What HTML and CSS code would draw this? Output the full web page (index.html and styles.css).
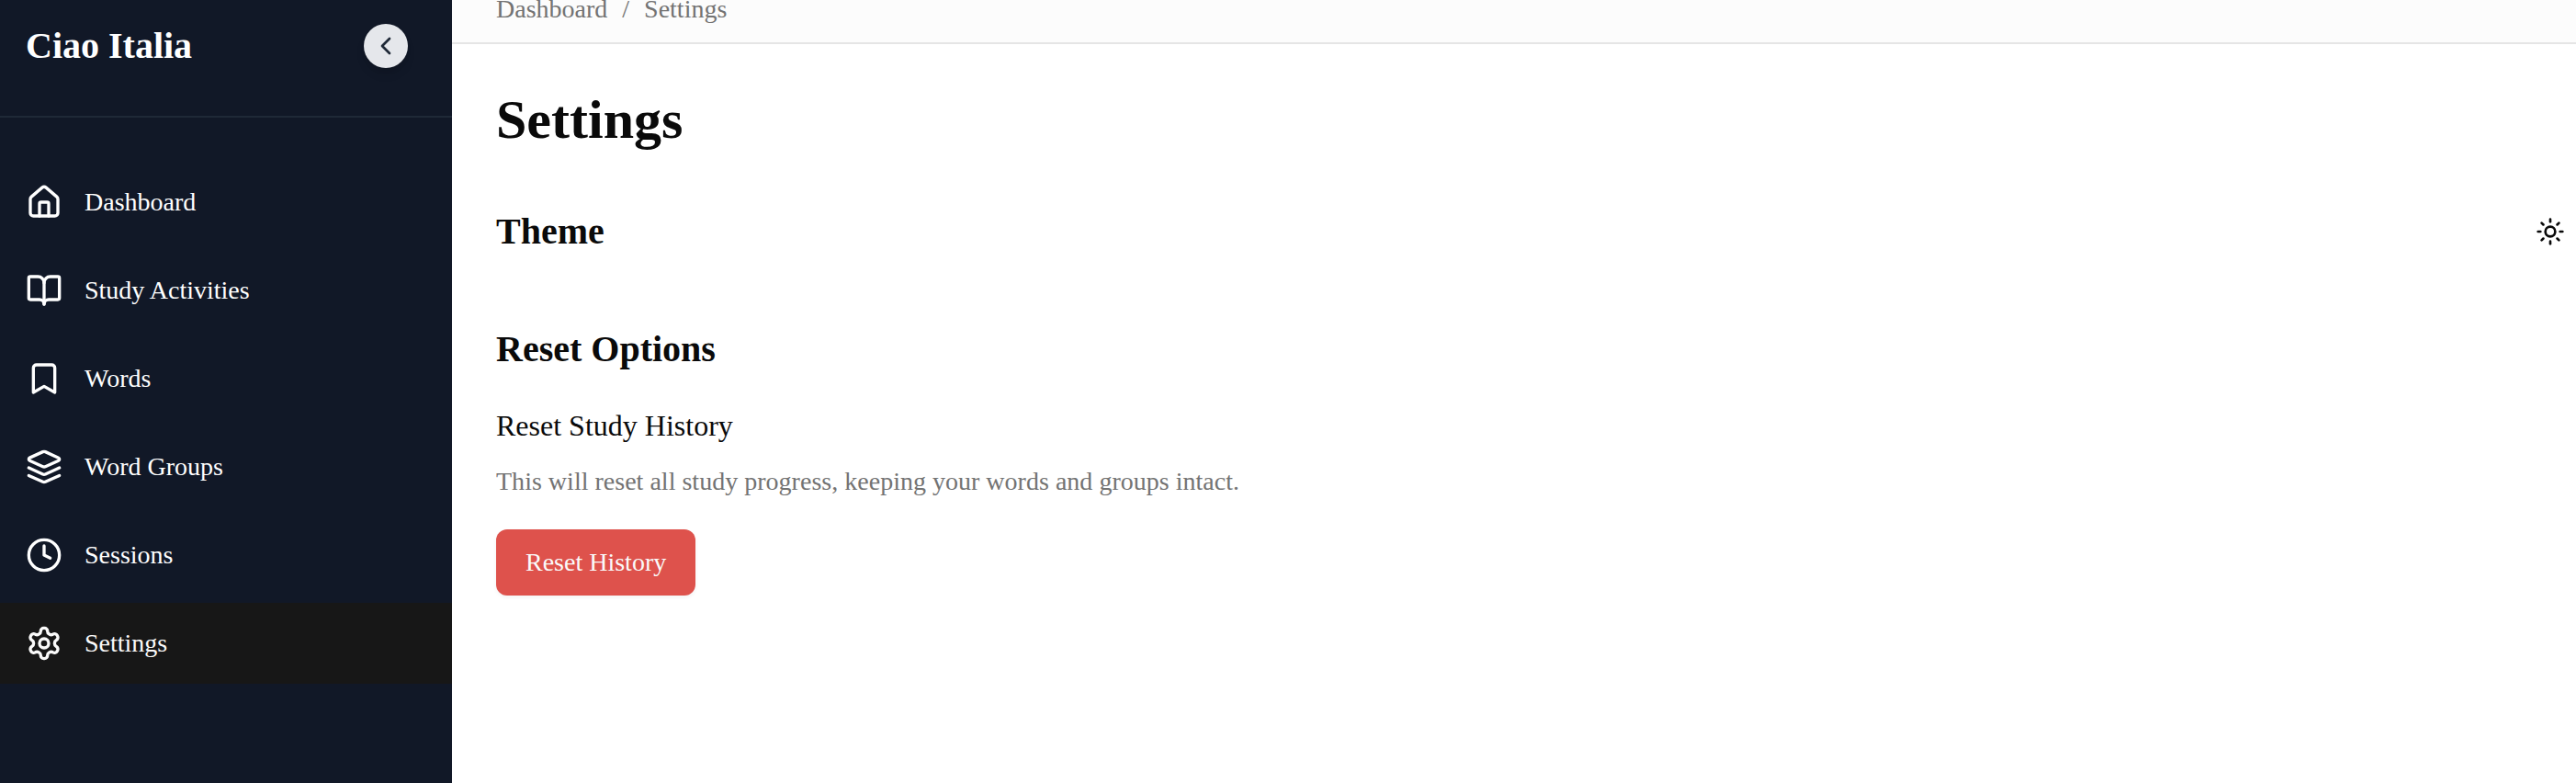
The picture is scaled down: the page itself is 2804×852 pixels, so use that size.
FILE: index.html
```html
<!DOCTYPE html>
<html lang="en">
<head>
<meta charset="utf-8">
<title>Ciao Italia - Settings</title>
<link rel="stylesheet" href="styles.css">
</head>
<body>
<div class="app">
  <aside class="sidebar">
    <header class="sidebar-header">
      <span class="brand">Ciao Italia</span>
      <button class="toggle" aria-label="Collapse sidebar">
        <svg class="icon icon-sm" viewBox="0 0 24 24"><path d="m15 18-6-6 6-6"/></svg>
      </button>
    </header>
    <nav class="nav">
      <a class="nav-item"><svg class="icon" viewBox="0 0 24 24"><path d="M15 21v-8a1 1 0 0 0-1-1h-4a1 1 0 0 0-1 1v8"/><path d="M3 10a2 2 0 0 1 .709-1.528l7-5.999a2 2 0 0 1 2.582 0l7 5.999A2 2 0 0 1 21 10v9a2 2 0 0 1-2 2H5a2 2 0 0 1-2-2z"/></svg><span>Dashboard</span></a>
      <a class="nav-item"><svg class="icon" viewBox="0 0 24 24"><path d="M12 7v14"/><path d="M3 18a1 1 0 0 1-1-1V4a1 1 0 0 1 1-1h5a4 4 0 0 1 4 4 4 4 0 0 1 4-4h5a1 1 0 0 1 1 1v13a1 1 0 0 1-1 1h-6a3 3 0 0 0-3 3 3 3 0 0 0-3-3z"/></svg><span>Study Activities</span></a>
      <a class="nav-item"><svg class="icon" viewBox="0 0 24 24"><path d="m19 21-7-4-7 4V5a2 2 0 0 1 2-2h10a2 2 0 0 1 2 2v16z"/></svg><span>Words</span></a>
      <a class="nav-item"><svg class="icon" viewBox="0 0 24 24"><path d="m12.83 2.18a2 2 0 0 0-1.66 0L2.6 6.08a1 1 0 0 0 0 1.83l8.58 3.91a2 2 0 0 0 1.66 0l8.58-3.9a1 1 0 0 0 0-1.83Z"/><path d="m22 17.65-9.17 4.16a2 2 0 0 1-1.66 0L2 17.65"/><path d="m22 12.65-9.17 4.16a2 2 0 0 1-1.66 0L2 12.65"/></svg><span>Word Groups</span></a>
      <a class="nav-item"><svg class="icon" viewBox="0 0 24 24"><circle cx="12" cy="12" r="10"/><path d="M12 6v6l4 2"/></svg><span>Sessions</span></a>
      <a class="nav-item active"><svg class="icon" viewBox="0 0 24 24"><path d="M12.22 2h-.44a2 2 0 0 0-2 2v.18a2 2 0 0 1-1 1.73l-.43.25a2 2 0 0 1-2 0l-.15-.08a2 2 0 0 0-2.73.73l-.22.38a2 2 0 0 0 .73 2.73l.15.1a2 2 0 0 1 1 1.72v.51a2 2 0 0 1-1 1.74l-.15.09a2 2 0 0 0-.73 2.73l.22.38a2 2 0 0 0 2.73.73l.15-.08a2 2 0 0 1 2 0l.43.25a2 2 0 0 1 1 1.73V20a2 2 0 0 0 2 2h.44a2 2 0 0 0 2-2v-.18a2 2 0 0 1 1-1.73l.43-.25a2 2 0 0 1 2 0l.15.08a2 2 0 0 0 2.73-.73l.22-.39a2 2 0 0 0-.73-2.73l-.15-.08a2 2 0 0 1-1-1.74v-.5a2 2 0 0 1 1-1.74l.15-.09a2 2 0 0 0 .73-2.73l-.22-.38a2 2 0 0 0-2.73-.73l-.15.08a2 2 0 0 1-2 0l-.43-.25a2 2 0 0 1-1-1.73V4a2 2 0 0 0-2-2z"/><circle cx="12" cy="12" r="3"/></svg><span>Settings</span></a>
    </nav>
  </aside>
  <div class="content">
    <div class="topbar">
      <nav class="breadcrumb"><span>Dashboard</span><span>/</span><span>Settings</span></nav>
    </div>
    <main class="main">
      <h1 class="title">Settings</h1>
      <section class="theme">
        <h2 class="heading">Theme</h2>
        <button class="theme-button" aria-label="Switch theme">
          <svg class="icon icon-sm" viewBox="0 0 24 24"><circle cx="12" cy="12" r="4"/><path d="M12 2v2"/><path d="M12 20v2"/><path d="m4.93 4.93 1.41 1.41"/><path d="m17.66 17.66 1.41 1.41"/><path d="M2 12h2"/><path d="M20 12h2"/><path d="m6.34 17.66-1.41 1.41"/><path d="m19.07 4.93-1.41 1.41"/></svg>
        </button>
      </section>
      <section class="reset">
        <h2 class="heading">Reset Options</h2>
        <h3 class="subheading">Reset Study History</h3>
        <p class="description">This will reset all study progress, keeping your words and groups intact.</p>
        <button class="danger">Reset History</button>
      </section>
    </main>
  </div>
</div>
</body>
</html>
```

FILE: styles.css
```css
* {
  box-sizing: border-box;
  margin: 0;
  padding: 0;
}

body {
  font-family: "Liberation Serif", "Times New Roman", serif;
  font-size: 28px;
  line-height: 40px;
  color: #0a0a0a;
  background: #fff;
}

button {
  font: inherit;
  border: 0;
}

.app {
  display: flex;
  height: 852px;
  overflow: hidden;
}

.sidebar {
  width: 492px;
  flex: none;
  background: #111827;
  color: #fff;
}

.sidebar-header {
  display: flex;
  align-items: flex-start;
  justify-content: space-between;
  height: 128px;
  padding: 26px 48px 0 28px;
  border-bottom: 2px solid #1f2937;
}

.brand {
  font-size: 40px;
  line-height: 48px;
  font-weight: 700;
}

.toggle {
  display: flex;
  align-items: center;
  justify-content: center;
  width: 48px;
  height: 48px;
  border-radius: 50%;
  background: #e5e7eb;
  color: #1f2937;
  box-shadow: 0 8px 12px -2px rgba(0, 0, 0, 0.1), 0 4px 8px -4px rgba(0, 0, 0, 0.1);
}

.icon {
  width: 40px;
  height: 40px;
  flex: none;
  fill: none;
  stroke: currentColor;
  stroke-width: 2;
  stroke-linecap: round;
  stroke-linejoin: round;
}

.icon-sm {
  width: 32px;
  height: 32px;
}

.nav {
  display: flex;
  flex-direction: column;
  gap: 8px;
  padding-top: 48px;
}

.nav-item {
  display: flex;
  align-items: center;
  gap: 24px;
  height: 88px;
  padding: 0 28px;
}

.active {
  background: #171717;
  color: #fafafa;
}

.content {
  flex: 1;
  min-width: 0;
}

.topbar {
  display: flex;
  align-items: flex-end;
  height: 48px;
  padding: 0 48px 16px;
  background: #fcfcfc;
  border-bottom: 2px solid #e5e5e5;
}

.breadcrumb {
  display: flex;
  gap: 16px;
  color: #737373;
}

.main {
  padding: 48px 12px 0 48px;
}

.title {
  font-size: 60px;
  line-height: 69px;
  font-weight: 700;
}

.theme {
  display: flex;
  align-items: center;
  justify-content: space-between;
  height: 72px;
  margin-top: 51px;
}

.theme-button {
  display: flex;
  background: transparent;
  color: #0a0a0a;
}

.heading {
  font-size: 40px;
  line-height: 56px;
  font-weight: 700;
}

.reset {
  margin-top: 64px;
}

.subheading {
  margin-top: 32px;
  font-size: 32px;
  line-height: 46px;
  font-weight: 400;
}

.description {
  margin-top: 18px;
  color: #737373;
  letter-spacing: 0.014px;
}

.danger {
  height: 72px;
  margin-top: 32px;
  padding: 0 32px;
  border-radius: 12px;
  background: #de524c;
  color: #fafafa;
  box-shadow: 0 2px 4px rgba(0, 0, 0, 0.05);
}
```
